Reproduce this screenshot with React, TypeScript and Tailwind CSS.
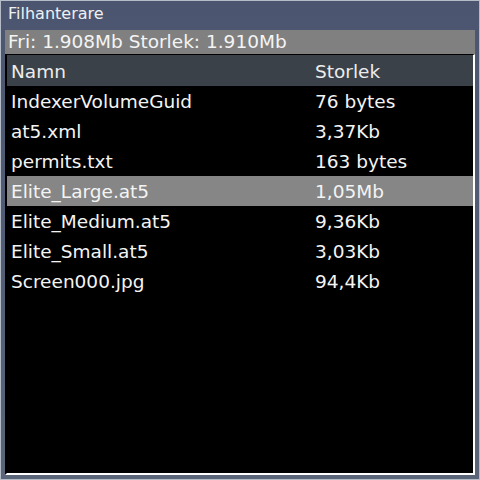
import React from 'react';

type FileRow = {
  name: string;
  size: string;
  selected?: boolean;
};

const files: FileRow[] = [
  { name: 'IndexerVolumeGuid', size: '76 bytes' },
  { name: 'at5.xml', size: '3,37Kb' },
  { name: 'permits.txt', size: '163 bytes' },
  { name: 'Elite_Large.at5', size: '1,05Mb', selected: true },
  { name: 'Elite_Medium.at5', size: '9,36Kb' },
  { name: 'Elite_Small.at5', size: '3,03Kb' },
  { name: 'Screen000.jpg', size: '94,4Kb' },
];

export default function App() {
  return (
    <div
      className="w-[480px] h-[480px] flex flex-col border border-[#b4bcc8] bg-gradient-to-b from-[#4b5570] to-[#5a6579] px-[4px] pb-[4px] text-[#f2f2f2]"
      style={{ fontFamily: '"DejaVu Sans", Verdana, sans-serif' }}
    >
      {/* Window title */}
      <div className="h-[29px] flex items-center pl-[3px] pb-[4px] text-[16px] leading-none text-[#eef0f2]">
        Filhanterare
      </div>

      {/* Free / size bar */}
      <div className="h-[24px] flex items-center pl-[3px] bg-[#808080] text-[18.5px] leading-none text-[#f4f4f4]">
        Fri: 1.908Mb Storlek: 1.910Mb
      </div>

      {/* File list */}
      <div className="flex-1 flex flex-col bg-black border-t border-l-2 border-t-black border-l-black border-r-2 border-b-2 border-r-white border-b-white">
        <div className="h-[31px] flex items-center pt-[4px] bg-[#3b4148] text-[18.5px] leading-none text-[#ececec]">
          <div className="w-[308px] pl-[4px]">Namn</div>
          <div>Storlek</div>
        </div>
        {files.map((f) => (
          <div
            key={f.name}
            className={`h-[30px] flex items-center pt-[3px] text-[18.5px] leading-none ${
              f.selected ? 'bg-[#868686] text-[#f4f4f4]' : 'text-[#f4f4f4]'
            }`}
          >
            <div className="w-[308px] pl-[4px]">{f.name}</div>
            <div>{f.size}</div>
          </div>
        ))}
      </div>
    </div>
  );
}
